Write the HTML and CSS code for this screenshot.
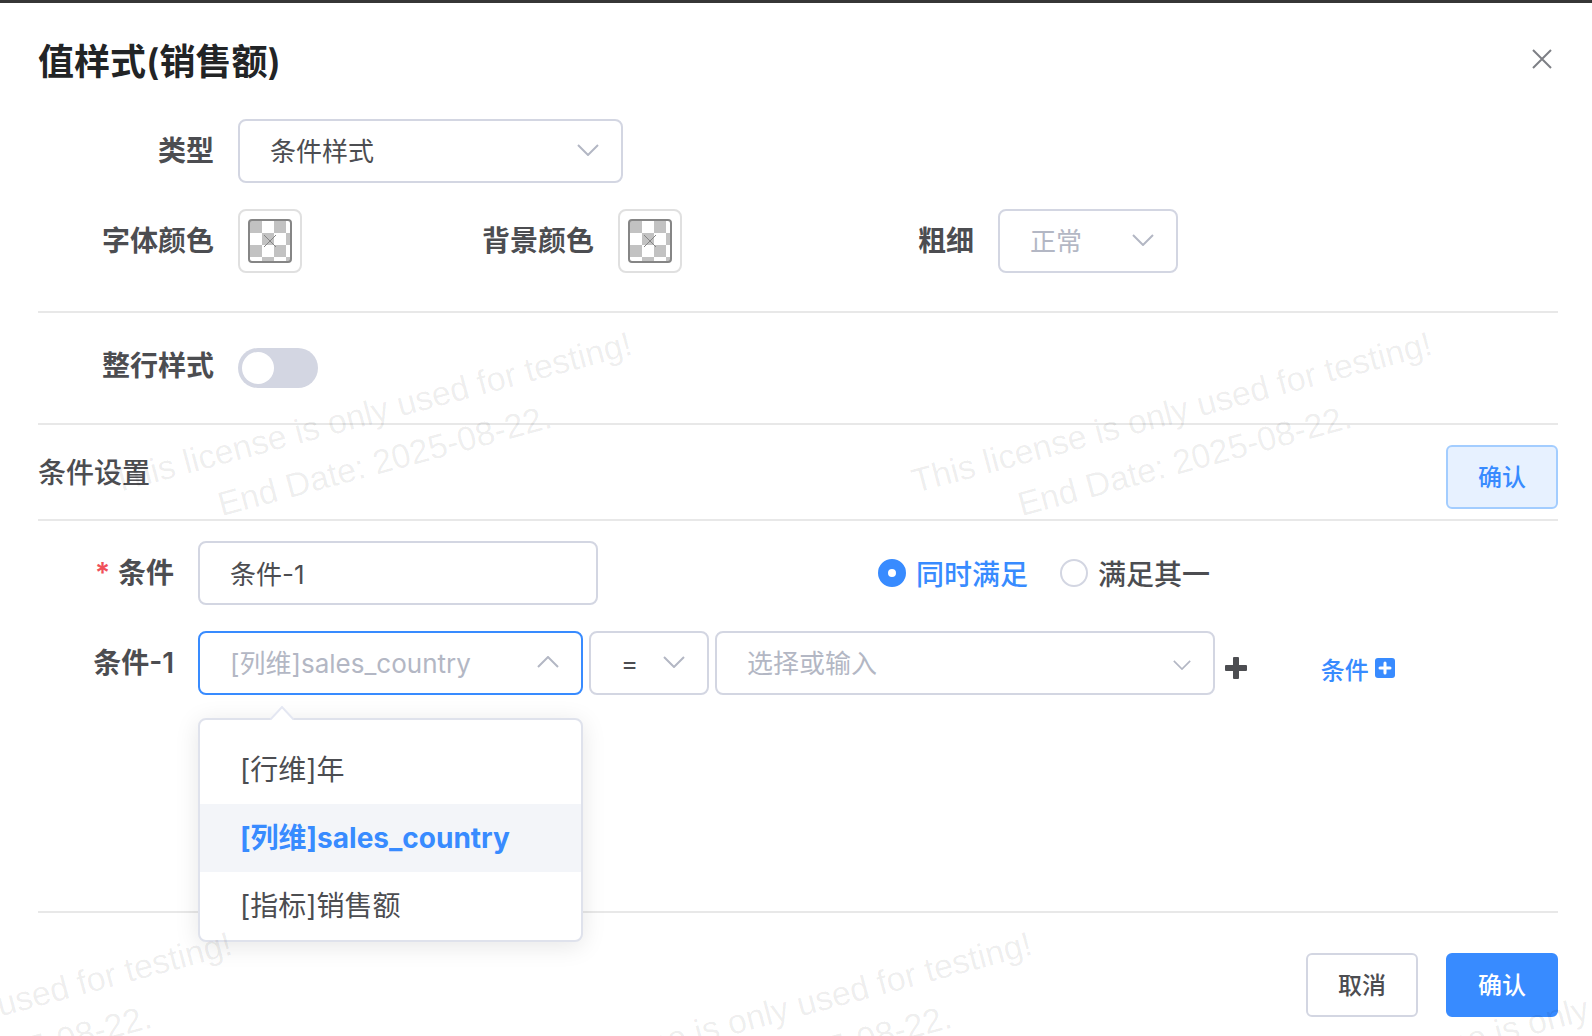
FILE: index.html
```html
<!DOCTYPE html>
<html lang="zh-CN">
<head>
  <meta charset="utf-8">
  <meta name="viewport" content="width=device-width, initial-scale=1">
  <title>值样式(销售额)</title>
  <link rel="stylesheet" href="styles.css">
</head>
<body>
  <form class="dialog">
    <header class="dialog-header">
      <h1 class="dialog-title">值样式(销售额)</h1>
      <button class="close" type="button" aria-label="关闭">
        <svg width="22" height="22" viewBox="0 0 22 22" fill="none" stroke="#7d7f85" stroke-width="2"><path d="M2 2L20 20M20 2L2 20"/></svg>
      </button>
    </header>

    <section class="section style-section">
      <div class="field">
        <label class="label" for="type">类型</label>
        <div class="select-wrap select-wide">
          <select class="control" id="type"><option>条件样式</option></select>
          <svg class="chevron" viewBox="0 0 22 12"><path d="M1 1L11 11L21 1"/></svg>
        </div>
      </div>
      <div class="columns">
        <div class="field">
          <label class="label" for="font-color">字体颜色</label>
          <button class="color-picker" id="font-color" type="button">
            <span class="swatch"><svg width="14" height="14" viewBox="0 0 14 14"><path d="M1 1L13 13M13 1L1 13"/></svg></span>
          </button>
        </div>
        <div class="field">
          <label class="label" for="back-color">背景颜色</label>
          <button class="color-picker" id="back-color" type="button">
            <span class="swatch"><svg width="14" height="14" viewBox="0 0 14 14"><path d="M1 1L13 13M13 1L1 13"/></svg></span>
          </button>
        </div>
        <div class="field">
          <label class="label" for="weight">粗细</label>
          <div class="select-wrap select-weight">
            <select class="control muted" id="weight"><option>正常</option></select>
            <svg class="chevron" viewBox="0 0 22 12"><path d="M1 1L11 11L21 1"/></svg>
          </div>
        </div>
      </div>
    </section>

    <section class="section row-section">
      <div class="field field-top">
        <label class="label" for="whole-row">整行样式</label>
        <input class="switch" id="whole-row" type="checkbox" role="switch">
      </div>
    </section>

    <section class="section condition-header">
      <h2 class="section-title">条件设置</h2>
      <button class="button button-plain" type="button">确认</button>
    </section>

    <section class="conditions">
      <div class="condition-name">
        <div class="field">
          <label class="label label-short required" for="cond-name">条件</label>
          <input class="control name-input" id="cond-name" type="text" value="条件-1">
        </div>
        <div class="radios">
          <label class="radio"><input type="radio" name="match" checked><span>同时满足</span></label>
          <label class="radio"><input type="radio" name="match"><span>满足其一</span></label>
        </div>
      </div>
      <div class="condition-rule">
        <div class="field">
          <label class="label label-short" for="cond-field">条件-1</label>
          <div class="rule">
            <div class="select-wrap select-wide">
              <select class="control muted active" id="cond-field"><option>[列维]sales_country</option></select>
              <svg class="chevron" viewBox="0 0 22 12"><path d="M1 11L11 1L21 11"/></svg>
              <div class="popup">
                <svg class="popup-arrow" width="24" height="14" viewBox="0 0 24 14"><path d="M0 14L12 1L24 14" fill="#fff" stroke="#e4e7f2" stroke-width="2"/></svg>
                <ul class="options" role="listbox" aria-label="条件-1">
                  <li class="option" role="option">[行维]年</li>
                  <li class="option selected" role="option" aria-selected="true">[列维]sales_country</li>
                  <li class="option" role="option">[指标]销售额</li>
                </ul>
              </div>
            </div>
            <div class="select-wrap select-operator">
              <select class="control" aria-label="运算符"><option>=</option></select>
              <svg class="chevron" viewBox="0 0 22 12"><path d="M1 1L11 11L21 1"/></svg>
            </div>
            <div class="select-wrap select-value">
              <input class="control" type="text" placeholder="选择或输入" aria-label="值">
              <svg class="chevron chevron-small" viewBox="0 0 22 12"><path d="M1 1L11 11L21 1"/></svg>
            </div>
            <button class="add" type="button" aria-label="添加值">
              <svg width="22" height="22" viewBox="0 0 22 22"><path d="M9 0h4q1 0 1 1v7h7q1 0 1 1v4q0 1-1 1h-7v7q0 1-1 1H9q-1 0-1-1v-7H1q-1 0-1-1V9q0-1 1-1h7V1q0-1 1-1z" fill="#4c4d51"/></svg>
            </button>
          </div>
        </div>
        <a class="add-condition" href="#">条件
          <svg width="20" height="20" viewBox="0 0 20 20"><rect width="20" height="20" rx="3" fill="#388bff"/><path d="M10 5v10M5 10h10" stroke="#fff" stroke-width="3" stroke-linecap="round"/></svg>
        </a>
      </div>
    </section>

    <footer class="dialog-footer">
      <button class="button" type="button">取消</button>
      <button class="button button-primary" type="submit">确认</button>
    </footer>
  </form>

  <div class="watermark" aria-hidden="true">
    <div class="marks">
      <p class="mark">This license is only used for testing!<br>End Date: 2025-08-22.</p>
      <p class="mark">This license is only used for testing!<br>End Date: 2025-08-22.</p>
    </div>
    <div class="marks marks-shifted">
      <p class="mark">This license is only used for testing!<br>End Date: 2025-08-22.</p>
      <p class="mark">This license is only used for testing!<br>End Date: 2025-08-22.</p>
      <p class="mark">This license is only used for testing!<br>End Date: 2025-08-22.</p>
    </div>
  </div>
</body>
</html>
```
FILE: styles.css
```css
:root {
  --blue: #388bff;
  --text: #4c4d51;
  --muted: #b3b7c4;
  --border: #d3d6e2;
  --line: #e8e8e8;
}

* {
  box-sizing: border-box;
}

body {
  margin: 0;
  position: relative;
  background: #fff;
  color: var(--text);
  font-family: Inter, "Noto Sans CJK SC", sans-serif;
  font-size: 28px;
}

button,
input,
select {
  font: inherit;
  color: inherit;
  margin: 0;
}

button {
  padding: 0;
  border: 0;
  background: none;
}

.dialog {
  display: flex;
  flex-direction: column;
  min-height: 100vh;
  padding: 37px 34px 19px 38px;
  border-top: 3px solid #363636;
}

.dialog-header {
  display: flex;
  justify-content: space-between;
  align-items: flex-start;
  padding-bottom: 35px;
}

.dialog-title {
  margin: 0;
  color: #222426;
  font-size: 36px;
  line-height: 44px;
  font-weight: 600;
}

.close {
  display: grid;
  place-items: center;
  width: 32px;
  height: 38px;
}

.section {
  border-bottom: 2px solid var(--line);
}

.style-section {
  display: grid;
  gap: 26px;
  padding-bottom: 38px;
}

.columns {
  display: grid;
  grid-template-columns: repeat(4, 1fr);
}

.field {
  display: flex;
  align-items: center;
  gap: 24px;
}

.field-top {
  align-items: flex-start;
}

.label {
  flex: none;
  width: 176px;
  line-height: 40px;
  text-align: right;
  font-weight: 600;
}

.field-top .label {
  line-height: 36px;
}

.label-short {
  width: 136px;
}

.required::before {
  content: "*";
  color: #f0505a;
  margin-right: 8px;
}

.select-wrap {
  position: relative;
  flex: none;
}

.select-wide {
  width: 385px;
}

.select-weight {
  width: 180px;
}

.select-operator {
  width: 120px;
}

.select-value {
  width: 500px;
}

.control {
  display: block;
  width: 100%;
  height: 64px;
  padding: 0 30px;
  border: 2px solid var(--border);
  border-radius: 8px;
  background: #fff;
  font-size: 26px;
  appearance: none;
  outline: 0;
}

.control::placeholder {
  color: var(--muted);
  opacity: 1;
}

.muted {
  color: var(--muted);
}

.active {
  border-color: var(--blue);
}

.name-input {
  width: 400px;
  padding-bottom: 2px;
}

.chevron {
  position: absolute;
  top: 25px;
  right: 24px;
  width: 22px;
  height: 12px;
  fill: none;
  stroke: #b3b7c4;
  stroke-width: 2;
  pointer-events: none;
}

.chevron-small {
  top: 29px;
  width: 18px;
  height: 10px;
}

.color-picker {
  display: grid;
  place-items: center;
  width: 64px;
  height: 64px;
  border: 2px solid #e0e0e0;
  border-radius: 8px;
}

.swatch {
  display: grid;
  place-items: center;
  width: 44px;
  height: 44px;
  border: 2px solid #858585;
  border-radius: 4px;
  background: repeating-conic-gradient(#fff 0 25%, #c2c2c2 0 50%) 0 0 / 24px 24px;
}

.swatch svg {
  fill: none;
  stroke: #858585;
  stroke-width: 1;
}

.row-section {
  padding: 35px 0;
}

.switch {
  appearance: none;
  width: 80px;
  height: 40px;
  padding: 4px;
  border-radius: 20px;
  background: var(--border);
}

.switch::before {
  content: "";
  display: block;
  width: 32px;
  height: 32px;
  border-radius: 50%;
  background: #fff;
}

.condition-header {
  display: flex;
  justify-content: space-between;
  align-items: flex-start;
  padding: 20px 0 10px;
}

.section-title {
  margin: 0;
  font-size: 28px;
  line-height: 56px;
  font-weight: 500;
}

.button {
  width: 112px;
  height: 64px;
  padding-bottom: 4px;
  border: 2px solid var(--border);
  border-radius: 6px;
  background: #fff;
  font-size: 24px;
  font-weight: 500;
}

.button-plain {
  border-color: #a3cdff;
  background: #e7f1ff;
  color: var(--blue);
}

.button-primary {
  border-color: var(--blue);
  background: var(--blue);
  color: #fff;
}

.conditions {
  display: grid;
  align-content: start;
  flex: 1;
  gap: 26px;
  padding: 20px 0;
}

.condition-name {
  display: grid;
  grid-template-columns: 1fr 1fr;
}

.radios {
  display: flex;
  align-items: center;
  gap: 32px;
  padding-left: 80px;
}

.radio {
  display: flex;
  align-items: center;
  gap: 10px;
  font-weight: 500;
}

.radio input {
  appearance: none;
  width: 28px;
  height: 28px;
  border: 2px solid var(--border);
  border-radius: 50%;
}

.radio input:checked {
  border: 10px solid var(--blue);
}

.radio input:checked + span {
  color: var(--blue);
}

.condition-rule {
  display: grid;
  grid-template-columns: 5fr 1fr;
  align-items: center;
}

.rule {
  display: flex;
  align-items: center;
  gap: 6px;
}

.add {
  display: flex;
  padding: 10px 4px 0;
}

.add-condition {
  display: flex;
  align-items: center;
  gap: 6px;
  padding: 10px 0 0 16px;
  color: var(--blue);
  font-size: 24px;
  font-weight: 500;
  text-decoration: none;
}

.popup {
  position: absolute;
  z-index: 1;
  top: 87px;
  left: 0;
  width: 100%;
  border: 2px solid #dfe2ec;
  border-radius: 8px;
  background: #fff;
  box-shadow: 0 4px 24px rgba(0, 0, 0, 0.1);
}

.popup-arrow {
  position: absolute;
  top: -14px;
  left: 70px;
}

.options {
  margin: 0;
  padding: 16px 0 0;
  list-style: none;
}

.option {
  padding: 0 40px;
  line-height: 68px;
}

.option.selected {
  background: #f3f5f9;
  color: var(--blue);
  font-weight: 700;
}

.dialog-footer {
  display: flex;
  justify-content: flex-end;
  gap: 28px;
  padding-top: 40px;
  border-top: 2px solid var(--line);
}

/* Repeating licence notice laid over the whole dialog */
.watermark {
  position: absolute;
  z-index: 2;
  inset: 0;
  padding-top: 136px;
  overflow: hidden;
  pointer-events: none;
  color: rgba(0, 0, 0, 0.07);
  font: 34px/50px "Liberation Sans", Arial, sans-serif;
  text-align: center;
}

.marks {
  display: flex;
  margin-left: -22px;
}

.marks-shifted {
  margin-left: -422px;
}

.mark {
  display: grid;
  place-content: center;
  flex: none;
  width: 800px;
  height: 600px;
  margin: 0;
  transform: rotate(-15deg);
}
```
